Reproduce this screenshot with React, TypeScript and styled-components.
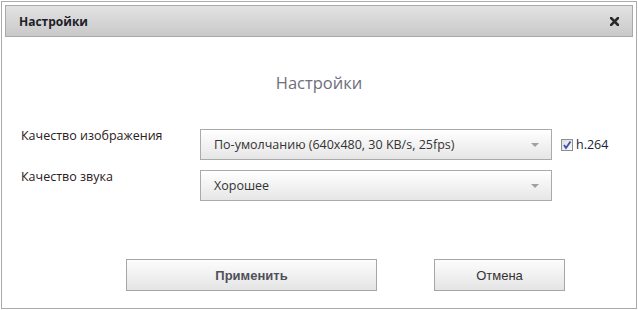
import React from "react";
import styled, { createGlobalStyle } from "styled-components";

const Global = createGlobalStyle`
  html, body { margin: 0; padding: 0; background: #ffffff; }
  body { font-family: "Open Sans", "Liberation Sans", sans-serif; }
`;

const Dialog = styled.div`
  box-sizing: border-box;
  margin: 1px 0 0 1px;
  width: 636px;
  height: 308px;
  border: 1px solid #ababab;
  padding: 3px;
  display: flex;
  flex-direction: column;
  background: #fff;
`;

const Header = styled.div`
  box-sizing: border-box;
  height: 32px;
  flex-shrink: 0;
  border: 1px solid #a9a9a9;
  background: linear-gradient(#e2e2e2, #c9c9c9);
  display: flex;
  align-items: center;
  justify-content: space-between;
  padding: 0 13px 0 13px;
`;

const HeaderTitle = styled.div`
  font-family: "Open Sans", sans-serif;
  font-weight: 700;
  font-size: 12px;
  color: #1e1e28;
`;

const CloseButton = styled.div`
  width: 9px;
  height: 9px;
  display: flex;
  cursor: pointer;
`;

const Body = styled.div`
  display: flex;
  flex-direction: column;
  padding: 0 0 0 16px;
`;

const Heading = styled.div`
  margin-top: 34px;
  text-align: center;
  font-size: 16.5px;
  color: #6e6e7c;
  line-height: 24px;
  padding-right: 16px;
`;

const Rows = styled.div`
  margin-top: 34px;
  display: flex;
  flex-direction: column;
  gap: 10px;
`;

const Row = styled.div`
  display: flex;
  align-items: flex-start;
`;

const Label = styled.div`
  width: 179px;
  font-size: 12.5px;
  line-height: 14px;
  color: #2a2020;
`;

const Select = styled.div`
  box-sizing: border-box;
  width: 352px;
  height: 31px;
  border: 1px solid #aaaaaa;
  background: linear-gradient(#ffffff, #e6e6e6);
  display: flex;
  align-items: center;
  justify-content: space-between;
  padding: 0 12px 0 13px;
  font-size: 12.5px;
  color: #333;
`;

const Arrow = styled.div`
  width: 0;
  height: 0;
  border-left: 4px solid transparent;
  border-right: 4px solid transparent;
  border-top: 4px solid #a0a0a0;
`;

const CheckWrap = styled.label`
  display: flex;
  align-items: center;
  gap: 3px;
  margin-left: 9px;
  margin-top: 8px;
  font-size: 12.5px;
  color: #1c1c3c;
  line-height: 16px;
`;

const Box = styled.span`
  box-sizing: border-box;
  width: 12px;
  height: 12px;
  border: 1px solid #8e8f8f;
  background: linear-gradient(135deg, #dcdcdc, #fbfbfb);
  display: flex;
  align-items: center;
  justify-content: center;
`;

const Buttons = styled.div`
  margin-top: 58px;
  display: flex;
  gap: 57px;
  padding-left: 105px;
`;

const Button = styled.div<{ $w: number; $primary?: boolean }>`
  box-sizing: border-box;
  width: ${(p) => p.$w}px;
  height: 32px;
  border: 1px solid #a6a6a6;
  background: linear-gradient(#fdfdfd, #e4e4e4);
  display: flex;
  align-items: center;
  justify-content: center;
  font-family: "Liberation Sans", Arial, sans-serif;
  font-size: 13px;
  font-weight: ${(p) => (p.$primary ? 700 : 400)};
  color: ${(p) => (p.$primary ? "#50505a" : "#333")};
`;

export default function App() {
  return (
    <>
      <Global />
      <Dialog>
        <Header>
          <HeaderTitle>Настройки</HeaderTitle>
          <CloseButton>
            <svg width="9" height="9" viewBox="0 0 9 9">
              <path d="M1 1L8 8M8 1L1 8" stroke="#2a2a2a" strokeWidth="2.6" strokeLinecap="square" />
            </svg>
          </CloseButton>
        </Header>
        <Body>
          <Heading>Настройки</Heading>
          <Rows>
            <Row>
              <Label>Качество изображения</Label>
              <Select>
                <span>По-умолчанию (640x480, 30 KB/s, 25fps)</span>
                <Arrow />
              </Select>
              <CheckWrap>
                <Box>
                  <svg width="10" height="10" viewBox="0 0 10 10">
                    <path d="M2 5L4 8L8.5 1.5" stroke="#3a4ea8" strokeWidth="1.8" fill="none" />
                  </svg>
                </Box>
                h.264
              </CheckWrap>
            </Row>
            <Row>
              <Label>Качество звука</Label>
              <Select>
                <span>Хорошее</span>
                <Arrow />
              </Select>
            </Row>
          </Rows>
          <Buttons>
            <Button $w={251} $primary>Применить</Button>
            <Button $w={131}>Отмена</Button>
          </Buttons>
        </Body>
      </Dialog>
    </>
  );
}
